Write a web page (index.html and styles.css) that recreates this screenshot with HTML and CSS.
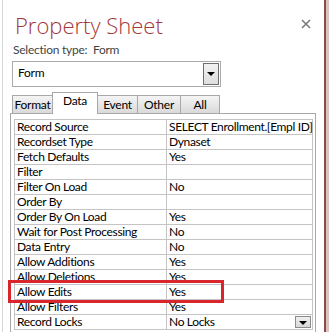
FILE: index.html
```html
<!DOCTYPE html>
<html lang="en">
<head>
    <meta charset="UTF-8">
    <title>Property Sheet</title>
    <link rel="stylesheet" href="styles.css">
</head>
<body>
    <div class="pane">
        <div class="header">
            <h1 class="title">Property Sheet</h1>
            <svg class="close" width="10" height="10" viewBox="0 0 10 10">
                <path d="M1 1 L9 9 M9 1 L1 9" stroke="#7a7a7a" stroke-width="1.6"/>
            </svg>
        </div>
        <div class="selection">Selection type:&nbsp; Form</div>

        <div class="combo">
            <span class="combo-text">Form</span>
            <span class="combo-btn"><span class="arrow"></span></span>
        </div>

        <div class="tabs">
            <div class="tab">Format</div>
            <div class="tab active">Data</div>
            <div class="tab">Event</div>
            <div class="tab">Other</div>
            <div class="tab">All</div>
        </div>

        <div class="panel">
            <table class="grid">
                <tr><td>Record Source</td><td>SELECT Enrollment.[Empl ID]</td></tr>
                <tr><td>Recordset Type</td><td>Dynaset</td></tr>
                <tr><td>Fetch Defaults</td><td>Yes</td></tr>
                <tr><td>Filter</td><td></td></tr>
                <tr><td>Filter On Load</td><td>No</td></tr>
                <tr><td>Order By</td><td></td></tr>
                <tr><td>Order By On Load</td><td>Yes</td></tr>
                <tr><td>Wait for Post Processing</td><td>No</td></tr>
                <tr><td>Data Entry</td><td>No</td></tr>
                <tr><td>Allow Additions</td><td>Yes</td></tr>
                <tr><td>Allow Deletions</td><td>Yes</td></tr>
                <tr class="marked"><td><span class="highlight"></span>Allow Edits</td><td>Yes</td></tr>
                <tr><td>Allow Filters</td><td>Yes</td></tr>
                <tr><td>Record Locks</td><td class="with-btn">No Locks<span class="cell-btn"><span class="arrow"></span></span></td></tr>
            </table>
        </div>
    </div>
    <div class="side"></div>
</body>
</html>
```

FILE: styles.css
```css
/* Page */
* {
    margin: 0;
    padding: 0;
    box-sizing: border-box;
}

body {
    display: flex;
    height: 332px;
    overflow: hidden;
    background: #fff;
    font-family: 'Lato', 'Open Sans', sans-serif;
    font-size: 12px;
    letter-spacing: -0.25px;
    color: #000;
}

/* Property pane */
.pane {
    width: 324px;
    margin-left: 2px;
    border-left: 1px solid #d6d6d6;
    border-right: 2px solid #8f4848;
    padding-left: 7px;
    background: #fff;
}

.side {
    flex: 1;
    background: #d9c3c3;
}

/* Header */
.header {
    display: flex;
    justify-content: space-between;
    align-items: flex-start;
    height: 42px;
    padding-top: 11px;
}

.title {
    font-family: 'Open Sans', sans-serif;
    font-weight: 300;
    font-size: 22px;
    line-height: 28px;
    letter-spacing: 0;
    color: #a4373a;
    margin-left: 5px;
}

.close {
    margin-top: 8px;
    margin-right: 13px;
}

.selection {
    line-height: 16px;
    color: #444;
    margin-left: 3px;
}

/* Combo box */
.combo {
    display: flex;
    justify-content: space-between;
    width: 209px;
    height: 26px;
    margin-top: 3px;
    margin-left: 2px;
    border: 1px solid #ababab;
    padding: 1px;
}

.combo-text {
    line-height: 16px;
    padding-left: 4px;
    padding-top: 2px;
}

.combo-btn {
    display: flex;
    align-items: center;
    justify-content: center;
    width: 16px;
    height: 22px;
    border: 1px solid #6f6f6f;
    background: linear-gradient(#f2f2f2, #dedede);
}

.arrow {
    width: 0;
    height: 0;
    border-left: 4px solid transparent;
    border-right: 4px solid transparent;
    border-top: 4px solid #000;
}

/* Tabs */
.tabs {
    display: flex;
    align-items: flex-end;
    margin-top: 5px;
    margin-left: 2px;
    height: 21px;
    position: relative;
    z-index: 1;
}

.tab {
    height: 18px;
    width: 41px;
    line-height: 17px;
    text-align: center;
    border: 1px solid #a8a8a8;
    border-bottom: none;
    background: linear-gradient(#f4f4f4, #dadada);
}

.tab:nth-child(4) { width: 44px; }
.tab:nth-child(5) { width: 40px; }

.tab + .tab {
    margin-left: -1px;
}

.tab.active {
    width: 46px;
    height: 22px;
    line-height: 15px;
    background: #fff;
    margin-bottom: -1px;
}

/* Tab panel with grid */
.panel {
    width: 306px;
    height: 230px;
    border: 1px solid #a8a8a8;
    border-bottom: none;
    padding: 5px 2px 0 3px;
}

.grid {
    width: 299px;
    table-layout: fixed;
    border-collapse: collapse;
    letter-spacing: -0.35px;
}

.grid td {
    height: 15px;
    line-height: 14px;
    padding: 0 2px;
    border: 1px solid #c4c4c4;
    white-space: nowrap;
}

.grid td:first-child {
    width: 152px;
}

.marked td:first-child {
    position: relative;
}

.highlight {
    position: absolute;
    left: -7px;
    top: -5px;
    width: 216px;
    height: 23px;
    border: 3px solid #d9262d;
}

.with-btn {
    position: relative;
}

.cell-btn {
    position: absolute;
    right: 1px;
    top: 1px;
    width: 16px;
    height: 12px;
    display: flex;
    align-items: flex-end;
    justify-content: center;
    padding-bottom: 2px;
    border: 1px solid #8c8c8c;
    background: linear-gradient(#f0f0f0, #d8d8d8);
}
```
